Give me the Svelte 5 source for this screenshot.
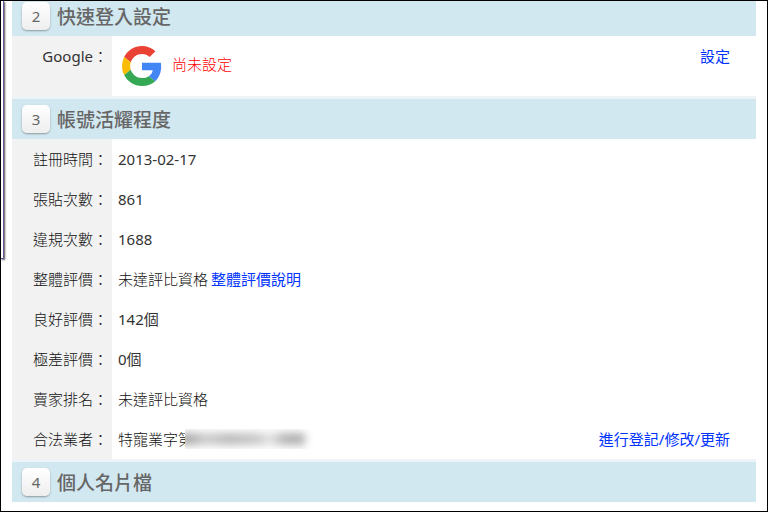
<script lang="ts">
  type Row = {
    label: string;
    value: string;
    numeric?: boolean;
    link?: string;
    action?: string;
    masked?: boolean;
  };

  let rows: Row[] = [
    { label: "註冊時間", value: "2013-02-17", numeric: true },
    { label: "張貼次數", value: "861", numeric: true },
    { label: "違規次數", value: "1688", numeric: true },
    { label: "整體評價", value: "未達評比資格", link: "整體評價說明" },
    { label: "良好評價", value: "142個", numeric: true },
    { label: "極差評價", value: "0個", numeric: true },
    { label: "賣家排名", value: "未達評比資格" },
    { label: "合法業者", value: "特寵業字第", masked: true, action: "進行登記/修改/更新" },
  ];
</script>

{#snippet heading(num: number, title: string)}
  <h2 class="heading"><span class="num">{num}</span>{title}</h2>
{/snippet}

<div class="frame" lang="zh-Hant">
  <div class="side-panel"></div>
  <main class="settings">
    {@render heading(2, "快速登入設定")}
    <dl class="rows">
      <div class="row tall">
        <dt><span class="latin">Google</span>：</dt>
        <dd>
          <svg class="google" viewBox="0 0 48 48" aria-hidden="true">
            <path fill="#ea4335" d="M24 9.5c3.54 0 6.71 1.22 9.21 3.6l6.85-6.85C35.9 2.38 30.47 0 24 0 14.62 0 6.51 5.38 2.56 13.22l7.98 6.19C12.43 13.72 17.74 9.5 24 9.5z" />
            <path fill="#4285f4" d="M46.98 24.55c0-1.57-.15-3.09-.38-4.55H24v9.02h12.94c-.58 2.96-2.26 5.48-4.78 7.18l7.73 6c4.51-4.18 7.09-10.36 7.09-17.65z" />
            <path fill="#fbbc05" d="M10.53 28.59A14.5 14.5 0 0 1 9.77 24c0-1.6.27-3.14.76-4.59l-7.98-6.19A23.9 23.9 0 0 0 0 24c0 3.88.92 7.54 2.56 10.78l7.97-6.19z" />
            <path fill="#34a853" d="M24 48c6.48 0 11.93-2.13 15.89-5.81l-7.73-6c-2.15 1.45-4.92 2.3-8.16 2.3-6.26 0-11.57-4.22-13.47-9.91l-7.98 6.19C6.51 42.62 14.62 48 24 48z" />
          </svg>
          <span class="unset">尚未設定</span>
          <a class="action" href="#google">設定</a>
        </dd>
      </div>
    </dl>

    {@render heading(3, "帳號活耀程度")}
    <dl class="rows">
      {#each rows as row}
        <div class="row">
          <dt>{row.label}：</dt>
          <dd>
            <span class:latin={row.numeric}>{row.value}</span>
            {#if row.masked}<span class="mask"></span>{/if}
            {#if row.link}<a class="inline-link" href="#rating">{row.link}</a>{/if}
            {#if row.action}<a class="action" href="#register">{row.action}</a>{/if}
          </dd>
        </div>
      {/each}
    </dl>

    {@render heading(4, "個人名片檔")}
  </main>
</div>

<style>
  .frame {
    position: relative;
    box-sizing: border-box;
    min-height: 100vh;
    padding: 0 11px 9px;
    border: 1px solid #000;
    overflow: hidden;
    background: #fff;
    color: #111;
    font-family: "Noto Sans", "Noto Sans CJK TC", sans-serif;
    font-size: 15px;
    font-weight: 300;
    line-height: 20px;
  }
  /* edge of the floating panel on the left */
  .side-panel {
    position: absolute;
    top: 0;
    left: 0;
    width: 2px;
    height: 257px;
    border-right: 1px solid #6a559c;
    border-bottom: 1px solid #6a559c;
    box-shadow: 1px 1px 2px #555;
  }
  .settings {
    margin-top: -5px;
  }
  .heading {
    display: flex;
    align-items: center;
    gap: 7px;
    height: 40px;
    margin: 0;
    padding-left: 10px;
    background: #d2e8f0;
    color: #666;
    font-family: "Noto Sans CJK TC", sans-serif;
    font-size: 19px;
    font-weight: 500;
  }
  .num {
    width: 28px;
    height: 28px;
    border-radius: 5px;
    background: linear-gradient(#fff, #eee);
    box-shadow: 0 1px 2px #8b989d;
    font-family: "Noto Sans", sans-serif;
    font-size: 15px;
    font-weight: 400;
    line-height: 29px;
    text-align: center;
  }
  .rows {
    margin: 0;
    border-bottom: 3px solid #edf3f6;
  }
  .row {
    display: flex;
    min-height: 40px;
  }
  dt {
    flex: none;
    box-sizing: border-box;
    width: 100px;
    padding: 10px 4px 10px 0;
    background: #f2f2f2;
    text-align: right;
  }
  dd {
    display: flex;
    flex: 1;
    align-items: flex-start;
    margin: 0;
    padding: 10px 26px 10px 6px;
  }
  .tall {
    min-height: 60px;
  }
  .latin {
    color: #333;
    font-weight: 400;
  }
  .google {
    width: 40px;
    height: 40px;
    margin-left: 4px;
  }
  .unset {
    align-self: center;
    margin-left: 10px;
    padding-bottom: 4px;
    color: #f00;
  }
  a {
    color: #03f;
    font-weight: 400;
    text-decoration: none;
  }
  a:hover {
    text-decoration: underline;
  }
  .inline-link {
    margin-left: 3px;
  }
  .action {
    margin-left: auto;
  }
  .mask {
    width: 130px;
    height: 20px;
    margin-left: -8px;
    overflow: hidden;
    background: #fff;
  }
  .mask::before {
    content: "";
    display: block;
    width: 124px;
    height: 12px;
    margin: 4px 0 0 -4px;
    background: linear-gradient(90deg, #999, #ccc 20%, #b8b8b8 40%, #c8c8c8 62%, #e4e4e4 72%, #b0b0b0 84%, #b0b0b0);
    filter: blur(4px);
  }
</style>
